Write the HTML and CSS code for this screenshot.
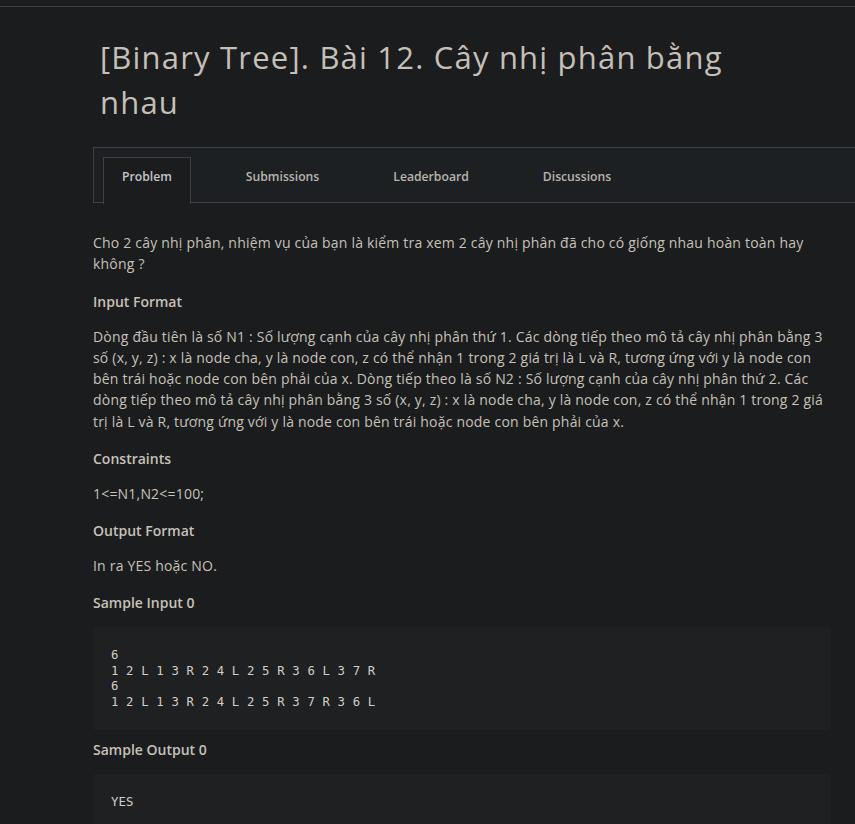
FILE: index.html
```html
<!DOCTYPE html>
<html lang="vi">
<head>
<meta charset="utf-8">
<title>[Binary Tree]. Bài 12. Cây nhị phân bằng nhau</title>
<link rel="stylesheet" href="styles.css">
</head>
<body>
<div class="topbar"></div>
<main class="page">
  <h1 class="title">[Binary Tree]. Bài 12. Cây nhị phân bằng nhau</h1>
  <nav class="tabs">
    <a class="tab active">Problem</a>
    <a class="tab">Submissions</a>
    <a class="tab">Leaderboard</a>
    <a class="tab">Discussions</a>
  </nav>
  <section class="content">
    <p>Cho 2 cây nhị phân, nhiệm vụ của bạn là kiểm tra xem 2 cây nhị phân đã cho có giống nhau hoàn toàn hay không ?</p>
    <h3>Input Format</h3>
    <p>Dòng đầu tiên là số N1 : Số lượng cạnh của cây nhị phân thứ 1. Các dòng tiếp theo mô tả cây nhị phân bằng 3 số (x, y, z) : x là node cha, y là node con, z có thể nhận 1 trong 2 giá trị là L và R, tương ứng với y là node con bên trái hoặc node con bên phải của x. Dòng tiếp theo là số N2 : Số lượng cạnh của cây nhị phân thứ 2. Các dòng tiếp theo mô tả cây nhị phân bằng 3 số (x, y, z) : x là node cha, y là node con, z có thể nhận 1 trong 2 giá trị là L và R, tương ứng với y là node con bên trái hoặc node con bên phải của x.</p>
    <h3>Constraints</h3>
    <p>1&lt;=N1,N2&lt;=100;</p>
    <h3>Output Format</h3>
    <p>In ra YES hoặc NO.</p>
    <h3>Sample Input 0</h3>
    <pre class="code">6
1 2 L 1 3 R 2 4 L 2 5 R 3 6 L 3 7 R
6
1 2 L 1 3 R 2 4 L 2 5 R 3 7 R 3 6 L</pre>
    <h3 class="after-code">Sample Output 0</h3>
    <pre class="code">YES</pre>
  </section>
</main>
</body>
</html>
```

FILE: styles.css
```css
html, body {
  margin: 0;
  padding: 0;
  background: #1b1c1e;
  overflow-x: hidden;
}
body {
  font-family: "Open Sans", "Noto Sans", sans-serif;
  color: #c6c1b9;
}
.topbar {
  height: 6px;
  border-bottom: 1px solid #3b3c3e;
}
.page {
  margin-left: 93px;
  width: 738px;
}
.title {
  margin: 0;
  width: 660px;
  padding: 28px 0 0 7px;
  font-size: 31px;
  line-height: 45px;
  font-weight: 500;
  color: #c4bfb7;
  letter-spacing: 1.2px;
}
.tabs {
  margin-top: 22px;
  width: 800px;
  height: 54px;
  border: 1px solid #3e4043;
  background: #1d2022;
  display: flex;
  gap: 36px;
  padding-left: 9px;
  box-sizing: content-box;
}
.tab {
  display: block;
  margin-top: 9px;
  height: 45px;
  padding: 0 18px;
  font-size: 12.2px;
  font-weight: 600;
  line-height: 37px;
  color: #b9b4ac;
  border: 1px solid transparent;
  border-bottom: 0;
}
.tab.active {
  border-color: #3e4043;
  background: #1b1c1e;
  height: 46px;
  color: #c2c6c9;
}
.content {
  padding-top: 29px;
  font-size: 14px;
  line-height: 21px;
}
.content p {
  margin: 0 0 16px;
  line-height: 21.25px;
  letter-spacing: 0.2px;
}
.content h3 {
  margin: 0 0 14px;
  font-size: 14px;
  font-weight: 600;
  line-height: 21px;
  color: #c6c1b9;
}
.content h3.after-code {
  margin-top: 9px;
}
.code {
  margin: 0;
  background: #1f2022;
  border-radius: 3px;
  padding: 21px 18px 20px;
  font-family: "DejaVu Sans Mono", monospace;
  font-size: 12.3px;
  line-height: 15.5px;
  letter-spacing: 0.15px;
  color: #d2cdc6;
}
```
